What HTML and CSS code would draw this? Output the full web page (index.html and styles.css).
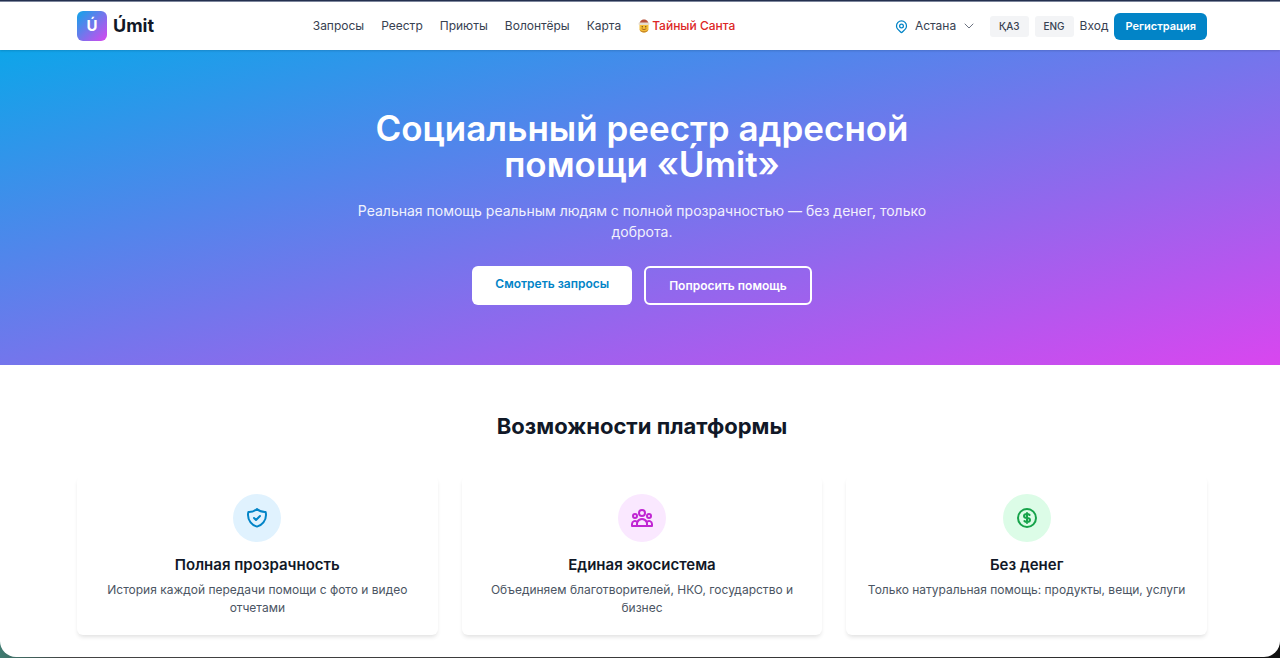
FILE: index.html
```html
<!DOCTYPE html>
<html lang="ru">
<head>
    <meta charset="UTF-8">
    <meta name="viewport" content="width=device-width, initial-scale=1">
    <title>Úmit</title>
    <link rel="stylesheet" href="styles.css">
</head>
<body>
<div class="window">
    <header class="header">
        <div class="container header-inner">
            <a class="brand" href="#"><span class="brand-mark">Ú</span><span class="brand-name">Úmit</span></a>
            <nav class="nav">
                <a href="#">Запросы</a>
                <a href="#">Реестр</a>
                <a href="#">Приюты</a>
                <a href="#">Волонтёры</a>
                <a href="#">Карта</a>
                <a class="santa" href="#">
                    <svg width="12" height="14" viewBox="0 0 24 28" aria-hidden="true">
                        <path d="M3 11C3 4 7 1 12 1s9 3 9 10z" fill="#b8513a"/>
                        <path d="M3 12h18v7c0 5-4 8-9 8s-9-3-9-8z" fill="#f5bd35"/>
                        <path d="M3 20c1 3 4 4 9 4s8-1 9-4v1c-1 4-5 6-9 6s-8-2-9-6z" fill="#c98a2b"/>
                        <rect x="1" y="7" width="22" height="5" rx="2.5" fill="#e6dccb"/>
                        <circle cx="8.500" cy="15.500" r="1.400" fill="#6b4218"/>
                        <circle cx="15.500" cy="15.500" r="1.400" fill="#6b4218"/>
                        <path d="M8 20q4 3 8 0" fill="none" stroke="#8b4a1c" stroke-width="1.500"/>
                    </svg>
                    <span>Тайный Санта</span>
                </a>
            </nav>
            <div class="actions">
                <div class="city">
                    <svg class="pin" width="15" height="15" viewBox="0 0 24 24" aria-hidden="true">
                        <path d="M17.657 16.657L13.414 20.900a2 2 0 01-2.827 0l-4.244-4.243a8 8 0 1111.314 0z"/>
                        <circle cx="12" cy="11" r="3"/>
                    </svg>
                    <select aria-label="Город">
                        <option>Астана</option>
                    </select>
                    <svg class="chevron" width="12" height="12" viewBox="0 0 24 24" aria-hidden="true">
                        <path d="M4 8l8 8 8-8"/>
                    </svg>
                </div>
                <button class="lang" type="button">ҚАЗ</button>
                <button class="lang" type="button">ENG</button>
                <a class="login" href="#">Вход</a>
                <a class="register" href="#">Регистрация</a>
            </div>
        </div>
    </header>

    <section class="hero">
        <div class="hero-inner">
            <h1>Социальный реестр адресной помощи «Úmit»</h1>
            <p>Реальная помощь реальным людям с полной прозрачностью — без денег, только доброта.</p>
            <div class="hero-buttons">
                <a class="btn btn-white" href="#">Смотреть запросы</a>
                <a class="btn btn-outline" href="#">Попросить помощь</a>
            </div>
        </div>
    </section>

    <section class="features">
        <div class="container">
            <h2>Возможности платформы</h2>
            <div class="cards">
                <article class="card">
                    <div class="icon icon-blue">
                        <svg width="24" height="24" viewBox="0 0 24 24" aria-hidden="true">
                            <path d="M9 12l2 2 4-4m5.618-4.016A11.955 11.955 0 0112 2.944a11.955 11.955 0 01-8.618 3.040A12.020 12.020 0 003 9c0 5.591 3.824 10.290 9 11.622 5.176-1.332 9-6.030 9-11.622 0-1.042-.133-2.052-.382-3.016z"/>
                        </svg>
                    </div>
                    <h3>Полная прозрачность</h3>
                    <p>История каждой передачи помощи с фото и видео отчетами</p>
                </article>
                <article class="card">
                    <div class="icon icon-pink">
                        <svg width="24" height="24" viewBox="0 0 24 24" aria-hidden="true">
                            <path d="M17 20h5v-2a3 3 0 00-5.356-1.857M17 20H7m10 0v-2c0-.656-.126-1.283-.356-1.857M7 20H2v-2a3 3 0 015.356-1.857M7 20v-2c0-.656.126-1.283.356-1.857m0 0a5.002 5.002 0 019.288 0M15 7a3 3 0 11-6 0 3 3 0 016 0zm6 3a2 2 0 11-4 0 2 2 0 014 0zM7 10a2 2 0 11-4 0 2 2 0 014 0z"/>
                        </svg>
                    </div>
                    <h3>Единая экосистема</h3>
                    <p>Объединяем благотворителей, НКО, государство и бизнес</p>
                </article>
                <article class="card">
                    <div class="icon icon-green">
                        <svg width="24" height="24" viewBox="0 0 24 24" aria-hidden="true">
                            <path d="M12 8c-1.657 0-3 .895-3 2s1.343 2 3 2 3 .895 3 2-1.343 2-3 2m0-8c1.110 0 2.080.402 2.599 1M12 8V7m0 1v8m0 0v1m0-1c-1.110 0-2.080-.402-2.599-1M21 12a9 9 0 11-18 0 9 9 0 0118 0z"/>
                        </svg>
                    </div>
                    <h3>Без денег</h3>
                    <p>Только натуральная помощь: продукты, вещи, услуги</p>
                </article>
            </div>
        </div>
    </section>
</div>
</body>
</html>
```
FILE: styles.css
```css
* {
    box-sizing: border-box;
}
body {
    margin: 0;
    padding-bottom: 1px;
    background: linear-gradient(to right, #3f7a70, #444 5%, #333 80%, #111);
    border-top: 1px solid #24304f;
    font-family: Inter, "Liberation Sans", sans-serif;
    font-size: 12px;
    line-height: 18px;
    color: #111827;
}
a {
    color: inherit;
    text-decoration: none;
}
h1, h2, h3, p {
    margin: 0;
}
svg {
    fill: none;
    stroke-linecap: round;
    stroke-linejoin: round;
}
.window {
    min-height: calc(100vh - 2px);
    background: #fff;
    border-radius: 0 0 16px 16px;
    overflow: hidden;
}
.container {
    padding: 0 73px 0 77px;
}

/* header */
.header {
    position: relative;
    background: #fff;
    border-top: 1px solid #7c869c;
    box-shadow: 0 1px 2px rgba(0, 0, 0, 0.15);
}
.header-inner {
    display: flex;
    align-items: center;
    justify-content: space-between;
    height: 48px;
    color: #374151;
}
.brand {
    display: flex;
    align-items: center;
    gap: 6px;
    color: #111827;
    font-weight: 700;
}
.brand-mark {
    width: 30px;
    height: 30px;
    border-radius: 6px;
    background: linear-gradient(to bottom right, #0ea5e9, #d946ef);
    color: #fff;
    font-size: 15px;
    line-height: 30px;
    text-align: center;
}
.brand-name {
    font-size: 18px;
}
.nav {
    display: flex;
    gap: 17px;
}
.santa {
    display: flex;
    align-items: center;
    gap: 2px;
    color: #dc2626;
    font-weight: 500;
}
.actions {
    display: flex;
    align-items: center;
    gap: 6px;
}
.city {
    display: flex;
    align-items: center;
    gap: 6px;
    margin-right: 9px;
}
.city select {
    appearance: none;
    border: 0;
    padding: 0;
    background: none;
    font: inherit;
    color: inherit;
}
.pin {
    stroke: #0284c7;
    stroke-width: 2;
}
.chevron {
    stroke: #6b7280;
    stroke-width: 2;
}
.lang {
    border: 0;
    border-radius: 3px;
    padding: 3px 9px;
    background: #f3f4f6;
    color: #374151;
    font: 500 10px/15px Inter, "Liberation Sans", sans-serif;
}
.register {
    padding: 6px 11px;
    border-radius: 6px;
    background: #0284c7;
    color: #fff;
    font-size: 11px;
    line-height: 15px;
    font-weight: 600;
}

/* hero */
.hero {
    padding: 60px 0 60px 4px;
    background: linear-gradient(to bottom right, #0ea5e9, #d946ef);
    color: #fff;
    text-align: center;
}
.hero-inner {
    max-width: 576px;
    margin: 0 auto;
}
.hero h1 {
    font-size: 35px;
    line-height: 36px;
    font-weight: 600;
}
.hero p {
    margin-top: 18px;
    font-size: 14px;
    line-height: 21px;
    opacity: 0.9;
}
.hero-buttons {
    display: flex;
    justify-content: center;
    gap: 12px;
    margin-top: 24px;
}
.btn {
    padding: 9px 23px;
    border-radius: 6px;
    line-height: 17px;
    font-weight: 600;
}
.btn-white {
    background: #fff;
    color: #0284c7;
}
.btn-outline {
    border: 2px solid #fff;
}

/* features */
.features {
    padding: 48px 0 22px;
    text-align: center;
}
.features h2 {
    font-size: 22px;
    line-height: 27px;
    font-weight: 700;
}
.cards {
    display: grid;
    grid-template-columns: repeat(3, 1fr);
    gap: 24px;
    margin-top: 36px;
}
.card {
    padding: 18px;
    border-radius: 6px;
    box-shadow: 0 3px 4px -1px rgba(0, 0, 0, 0.12);
}
.card h3 {
    margin: 12px 0 6px;
    font-size: 15px;
    line-height: 21px;
    font-weight: 600;
}
.card p {
    color: #4b5563;
}
.icon {
    display: flex;
    align-items: center;
    justify-content: center;
    width: 48px;
    height: 48px;
    margin: 0 auto;
    border-radius: 50%;
}
.icon svg {
    stroke: currentColor;
    stroke-width: 2;
}
.icon-blue {
    background: #e0f2fe;
    color: #0284c7;
}
.icon-pink {
    background: #fae8ff;
    color: #c026d3;
}
.icon-green {
    background: #dcfce7;
    color: #16a34a;
}
```
